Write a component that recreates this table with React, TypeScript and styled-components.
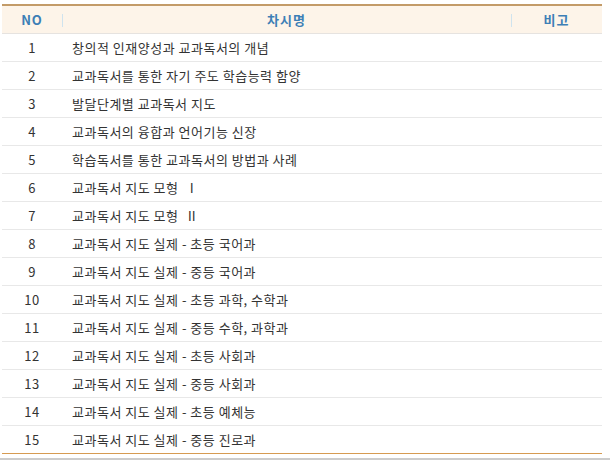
import styled, { createGlobalStyle } from "styled-components";

const GlobalStyle = createGlobalStyle`
  body {
    margin: 0;
    background: #ffffff;
    font-family: "Noto Sans CJK KR", "Noto Sans", sans-serif;
  }
`;

const Page = styled.div`
  padding: 4px 8px 0 2px;
`;

const Table = styled.table`
  width: 600px;
  border-collapse: collapse;
  table-layout: fixed;
  border-top: 2px solid #c39b68;
  border-bottom: 1px solid #d69b52;
  font-size: 13px;
  color: #333333;
`;

const HeadRow = styled.tr`
  background: #fdf4e9;
  border-bottom: 1px solid #e6e3e0;
`;

const HeadCell = styled.th<{ $divider?: boolean }>`
  position: relative;
  height: 27px;
  padding: 0;
  font-weight: 700;
  color: #3d7fb6;
  text-align: center;
  letter-spacing: 1px;

  &::before {
    content: "";
    display: ${(p) => (p.$divider ? "block" : "none")};
    position: absolute;
    left: 0;
    top: 8px;
    width: 1px;
    height: 13px;
    background: #cfe3ee;
  }
`;

const Row = styled.tr`
  border-bottom: 1px solid #e8e8e8;
  &:last-child {
    border-bottom: none;
  }
`;

const Cell = styled.td<{ $center?: boolean }>`
  height: 27px;
  padding: 0 0 0 ${(p) => (p.$center ? "0" : "10px")};
  text-align: ${(p) => (p.$center ? "center" : "left")};
  letter-spacing: 0.5px;
  white-space: pre;
`;

const BottomRule = styled.div`
  margin: 4px -8px 0 -2px;
  height: 2px;
  background: #cccccc;
`;

const lessons = [
  "창의적 인재양성과 교과독서의 개념",
  "교과독서를 통한 자기 주도 학습능력 함양",
  "발달단계별 교과독서 지도",
  "교과독서의 융합과 언어기능 신장",
  "학습독서를 통한 교과독서의 방법과 사례",
  "교과독서 지도 모형  Ⅰ",
  "교과독서 지도 모형  Ⅱ",
  "교과독서 지도 실제 - 초등 국어과",
  "교과독서 지도 실제 - 중등 국어과",
  "교과독서 지도 실제 - 초등 과학, 수학과",
  "교과독서 지도 실제 - 중등 수학, 과학과",
  "교과독서 지도 실제 - 초등 사회과",
  "교과독서 지도 실제 - 중등 사회과",
  "교과독서 지도 실제 - 초등 예체능",
  "교과독서 지도 실제 - 중등 진로과",
];

const App = () => {
  return (
    <Page>
      <GlobalStyle />
      <Table>
        <colgroup>
          <col style={{ width: 60 }} />
          <col style={{ width: 449 }} />
          <col style={{ width: 91 }} />
        </colgroup>
        <thead>
          <HeadRow>
            <HeadCell>NO</HeadCell>
            <HeadCell $divider>차시명</HeadCell>
            <HeadCell $divider>비고</HeadCell>
          </HeadRow>
        </thead>
        <tbody>
          {lessons.map((title, i) => (
            <Row key={i}>
              <Cell $center>{i + 1}</Cell>
              <Cell>{title}</Cell>
              <Cell />
            </Row>
          ))}
        </tbody>
      </Table>
      <BottomRule />
    </Page>
  );
};

export default App;
